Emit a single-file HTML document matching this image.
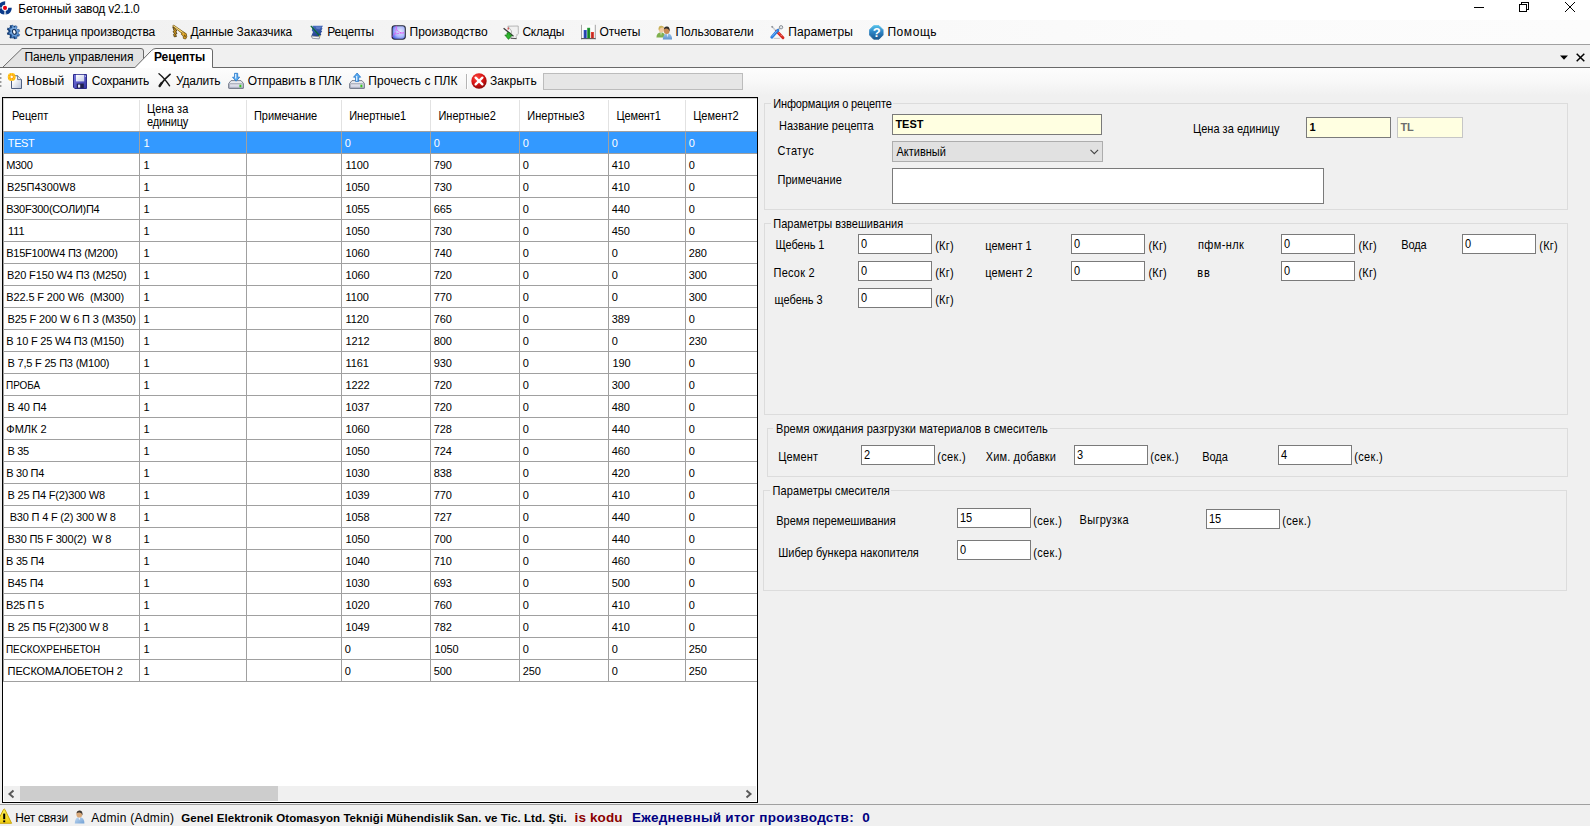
<!DOCTYPE html><html lang="ru"><head><meta charset="utf-8"><title>Бетонный завод v2.1.0</title><style>
html,body{margin:0;padding:0}
body{width:1590px;height:826px;overflow:hidden;position:relative;background:#f0f0f0;font-family:"Liberation Sans",sans-serif;font-size:11px;color:#000}
#app{position:absolute;left:0;top:0;width:1590px;height:826px;overflow:hidden}
#app div,#app span,#app svg{position:absolute;box-sizing:border-box}
#app span{white-space:pre;line-height:20px;height:20px}
.b{font-weight:bold}

</style></head><body><div id="app">
<div style="left:0px;top:0px;width:1590px;height:20px;background:#fff"></div>
<div style="left:0px;top:20px;width:1590px;height:24px;background:linear-gradient(90deg,#f0f0f0,#f4f4f4 25%,#f8f8f8 50%,#fbfbfb 75%,#fcfcfc)"></div>
<div style="left:0px;top:44px;width:1590px;height:1px;background:#a0a0a0"></div>
<div style="left:0px;top:45px;width:1590px;height:22px;background:#f0f0f0"></div>
<div style="left:0px;top:67px;width:1590px;height:1px;background:#696969"></div>
<div style="left:0px;top:68px;width:1590px;height:28px;background:linear-gradient(180deg,#fdfdfd,#f9f9f9 40%,#f0f0f0)"></div>
<svg style="left:0;top:0" width="14" height="20" viewBox="0 0 14 20"><path d="M6.04 12.79 A5.0 5.0 0 0 1 4.13 12.82 M0.05 8.60 A5.0 5.0 0 0 1 0.03 7.38" fill="none" stroke="#a9bbd4" stroke-width="3.4"/><path d="M0.03 7.38 A5.0 5.0 0 0 1 5.17 2.90 M10.00 7.73 A5.0 5.0 0 0 1 6.04 12.79 M4.13 12.82 A5.0 5.0 0 0 1 0.05 8.60" fill="none" stroke="#0a3a8a" stroke-width="3.5"/><circle cx="5" cy="7.9" r="2.05" fill="#e60012"/></svg>
<svg style="left:1470px;top:0" width="120" height="20" viewBox="0 0 120 20"><g stroke="#000" stroke-width="1" fill="none" shape-rendering="crispEdges"><path d="M4 7.500H14"/><path d="M51.500 4.500V2.500H58.500V9.500H56.500M49.500 4.500H56.500V11.500H49.500Z"/></g><path d="M95 2L105 12M105 2L95 12" stroke="#000" stroke-width="1" fill="none"/></svg>
<svg style="left:5px;top:24px" width="16" height="16" viewBox="0 0 16 16"><defs><radialGradient id="gg" cx="0.5" cy="0.45" r="0.6"><stop offset="0" stop-color="#b9d6f6"/><stop offset="0.6" stop-color="#5e97d8"/><stop offset="1" stop-color="#2a62aa"/></radialGradient></defs><path d="M12.87 5.40 L13.55 7.59 L12.01 8.25 L11.98 9.70 L13.48 10.90 L12.72 12.83 L11.11 11.92 L10.22 12.79 L10.70 14.82 L8.96 15.36 L8.21 13.42 L6.99 13.20 L6.17 14.86 L4.45 13.70 L5.01 11.86 L4.17 10.67 L2.53 11.00 L1.85 8.81 L3.39 8.15 L3.42 6.70 L1.92 5.50 L2.68 3.57 L4.29 4.48 L5.18 3.61 L4.70 1.58 L6.44 1.04 L7.19 2.98 L8.41 3.20 L9.23 1.54 L10.95 2.70 L10.39 4.54 L11.23 5.73Z" fill="#173d72"/><path d="M14.03 5.26 L14.68 7.35 L13.18 7.97 L13.16 9.34 L14.64 10.53 L13.94 12.36 L12.37 11.42 L11.56 12.24 L12.06 14.25 L10.43 14.76 L9.70 12.81 L8.58 12.60 L7.81 14.26 L6.20 13.14 L6.75 11.32 L5.96 10.20 L4.37 10.54 L3.72 8.45 L5.22 7.83 L5.24 6.46 L3.76 5.27 L4.46 3.44 L6.03 4.38 L6.84 3.56 L6.34 1.55 L7.97 1.04 L8.70 2.99 L9.82 3.20 L10.59 1.54 L12.20 2.66 L11.65 4.48 L12.44 5.60Z" fill="url(#gg)" stroke="#1d4a86" stroke-width="0.5"/><ellipse cx="9.3" cy="7.9" rx="1.8" ry="2.5" transform="rotate(-17 9.3 7.9)" fill="#fff" stroke="#15335c" stroke-width="1.2"/></svg>
<svg style="left:172px;top:24px" width="16" height="16" viewBox="0 0 16 16"><path d="M0.800 3 L3 4.200 L4.800 7 L3.600 7.600 L5 9.400 L3.600 10 L4.400 12.500 L2.200 12.800 L1.600 10.200 L2.600 9.200 L1 7.800 L2 6.600Z" fill="#c9931e" stroke="#3e2c08" stroke-width="0.800"/><path d="M0.600 2 L1.800 1.200 L12.400 8.600 L11.400 10.400Z" fill="#f0c040" stroke="#6a4a0c" stroke-width="0.700"/><path d="M10.400 7.800 L14.200 9.600 L14.800 12.800 L13.600 15 L11.400 14.400 L11.200 11.800 L9.400 10.600Z" fill="#e2a828" stroke="#6a4a0c" stroke-width="0.800"/><path d="M12.600 10.800 L13.300 13.200" stroke="#4a3408" stroke-width="1"/><path d="M1.600 2 L11.600 9" stroke="#fff0a8" stroke-width="0.700"/></svg>
<svg style="left:309px;top:24px" width="16" height="16" viewBox="0 0 16 16"><defs><linearGradient id="rg" x1="0" y1="0" x2="0.3" y2="1"><stop offset="0" stop-color="#4a70c4"/><stop offset="1" stop-color="#23418e"/></linearGradient></defs><path d="M3.600 1.800 L14 1.700 L12.600 4 L13.600 4.600 L12.200 6.600 L13.200 7.200 L11.600 9.600 L12.400 10.200 L10.800 12.600 L2.400 11.800 L4 8 L2.800 6.400Z" fill="url(#rg)"/><path d="M6.500 2.400 L12.500 2.400 L10.500 5.500 L7.500 4.800Z" fill="#7d9be0" opacity="0.550"/><path d="M2.200 12 L10.800 12.800 L10.200 14.900 L3.400 14.300Z" fill="#f2f3f8" stroke="#6a6f7c" stroke-width="0.700"/><path d="M1.800 1.800 L10.800 12" stroke="#0b6b34" stroke-width="1.200"/><path d="M10.400 11.600 L11.300 12.700" stroke="#e6c04a" stroke-width="1.100"/></svg>
<svg style="left:391px;top:24px" width="16" height="16" viewBox="0 0 16 16"><defs><radialGradient id="pg" cx="0.62" cy="0.42" r="0.75"><stop offset="0" stop-color="#e4e8ff"/><stop offset="0.55" stop-color="#aab6fb"/><stop offset="1" stop-color="#2f4fe8"/></radialGradient></defs><rect x="1.1" y="1.8" width="13.2" height="13.4" rx="2.6" fill="url(#pg)" stroke="#2a2d3a" stroke-width="1.1"/><path d="M0 13.5 L3.5 10 Q5.5 7 5.2 1 M5.2 3.5 Q6 8.5 12.5 9.2 M3.5 10 L13 8.6" fill="none" stroke="#e24ff0" stroke-width="0.8" stroke-dasharray="2 0.8"/></svg>
<svg style="left:503px;top:24px" width="16" height="16" viewBox="0 0 16 16"><path d="M4.8 2.2 L15.2 2 L15.4 9.6 L13.2 12.4 L13.6 14.8 L8 14.4 L8.5 7Z" fill="#f0f0f0" stroke="#9c9c9c" stroke-width="0.7"/><path d="M13.2 12.4 L15.4 9.6 L13 10.2Z" fill="#d0d0d0"/><path d="M0.6 4.2 L10.5 12.2" stroke="#3a3a3a" stroke-width="1.2"/><path d="M5.2 3.6 V5.6" stroke="#c82020" stroke-width="1.1"/><path d="M4 8.8 H7 V11 H9.2 L5.5 15.4 L1.8 11 H4Z" fill="#2fb52f" stroke="#157a15" stroke-width="0.7"/><path d="M7.5 14.2 L13.4 14.6" stroke="#444" stroke-width="0.9"/></svg>
<svg style="left:580px;top:24px" width="16" height="16" viewBox="0 0 16 16"><rect x="1.5" y="1" width="14" height="13.6" fill="#fbfbfb"/><path d="M1.5 0.8 V15.4 M15.3 0.8 V15.4" stroke="#a4a4a4" stroke-width="1"/><path d="M1.2 14.6 H15.6" stroke="#555" stroke-width="1.1"/><rect x="3.7" y="6" width="3" height="8.2" fill="#2b4cc2"/><rect x="7.2" y="3.8" width="2.9" height="10.4" fill="#1f9a32"/><rect x="10.9" y="8" width="3" height="6.2" fill="#e23a30"/><path d="M5.2 7 V14 M8.700 5 V14 M12.400 9 V14" stroke="#000" stroke-width="0.6" opacity="0.35"/></svg>
<svg style="left:656px;top:24px" width="16" height="16" viewBox="0 0 16 16"><defs><linearGradient id="ug" x1="0" y1="0" x2="0" y2="1"><stop offset="0" stop-color="#9fc4ea"/><stop offset="1" stop-color="#5e93cf"/></linearGradient></defs><path d="M0.400 13.600 Q0.600 8.400 5 8.200 Q9.200 8.400 9.400 13.600Z" fill="#7fb04e"/><path d="M4.400 8.400 L5 12 L5.700 8.400Z" fill="#e6f0da"/><ellipse cx="5.400" cy="5.200" rx="2.700" ry="3.200" fill="#f0c9a0"/><path d="M2.600 5.600 Q2.200 1.600 5.600 1.800 Q8 2 8 4 Q6 3 4.400 4.200 Q3.400 5 3.400 6.600Z" fill="#c9b25a"/><path d="M6.800 15.600 Q7 9.800 11.600 9.600 Q16 9.800 16.200 15.600Z" fill="url(#ug)"/><path d="M10.800 9.800 L11.500 13.500 L12.300 9.800Z" fill="#e8f0fa"/><ellipse cx="10.700" cy="6.400" rx="2.900" ry="3.500" fill="#c98a55"/><path d="M7.900 5.600 Q8 2.400 11 2.600 Q14 2.800 13.600 7.400 Q13 5 11 4.600 Q9 4.400 7.900 5.600Z" fill="#2c2a28"/></svg>
<svg style="left:769px;top:24px" width="16" height="16" viewBox="0 0 16 16"><g transform="translate(8.200 8) scale(0.880) translate(-8 -8)"><path d="M2 1.800 L8 8.200" stroke="#c9cdd2" stroke-width="1.700"/><path d="M1.600 1.400 L3 3" stroke="#8a8f96" stroke-width="1.700"/><path d="M7.200 7 L14.600 14.400" stroke="#d6241c" stroke-width="3.200" stroke-linecap="round"/><path d="M8.200 7.600 L14.400 13.800" stroke="#fff" stroke-width="0.700" stroke-dasharray="1.400 1.400"/><path d="M11.600 2.600 L8.400 6.400" stroke="#aeb4bb" stroke-width="1.800"/><circle cx="12.400" cy="2.600" r="1.900" fill="#e4e7ea" stroke="#7d848c" stroke-width="1"/><path d="M8.800 6 L1.800 14" stroke="#2a7ee0" stroke-width="3.200" stroke-linecap="round"/><path d="M8 6.400 L2 13.200" stroke="#8cc0f8" stroke-width="0.900"/><path d="M4 15.200 H11" stroke="#aaa" stroke-width="0.800"/></g></svg>
<svg style="left:868px;top:24px" width="16" height="16" viewBox="0 0 16 16"><defs><linearGradient id="hg" x1="0" y1="0" x2="0" y2="1"><stop offset="0" stop-color="#52bfe8"/><stop offset="0.45" stop-color="#2f86c6"/><stop offset="1" stop-color="#1b588f"/></linearGradient></defs><g transform="translate(8.300 8.400) scale(0.900) translate(-8.200 -8.400)"><path d="M5.200 0.900 H11.200 L15.700 5.400 V11.400 L11.200 15.900 H5.200 L0.800 11.400 V5.400Z" fill="url(#hg)" stroke="url(#hg)" stroke-width="1" stroke-linejoin="round"/></g></svg>
<svg style="left:0;top:45px" width="260" height="23" viewBox="0 0 260 23"><path d="M2.500 22.500 L22 3.500 L141 3.500 Q143.500 3.500 143.500 6 L143.500 22.500Z" fill="#e3e3e3" stroke="#696969" stroke-width="1"/><path d="M134.500 23 L151.500 5.500 Q153.500 3.500 156 3.500 L210 3.500 Q212.500 3.500 212.500 6 L212.500 23Z" fill="#fff"/><path d="M134.700 22.800 L151.500 5.500 Q153.500 3.500 156 3.500 L210 3.500 Q212.500 3.500 212.500 6 L212.500 22.500" fill="none" stroke="#696969" stroke-width="1"/></svg>
<svg style="left:1555px;top:50px" width="35" height="14" viewBox="0 0 35 14"><path d="M5 5.500 H13 L9 9.800Z" fill="#000"/><path d="M21.700 3.700 L29.300 11.300 M29.300 3.700 L21.700 11.300" stroke="#000" stroke-width="1.500" fill="none"/></svg>
<div style="left:0px;top:73px;width:1px;height:2px;background:#9a9a9a"></div>
<div style="left:1px;top:73px;width:1px;height:2px;background:#cfcfcf"></div>
<div style="left:0px;top:77px;width:1px;height:2px;background:#9a9a9a"></div>
<div style="left:1px;top:77px;width:1px;height:2px;background:#cfcfcf"></div>
<div style="left:0px;top:81px;width:1px;height:2px;background:#9a9a9a"></div>
<div style="left:1px;top:81px;width:1px;height:2px;background:#cfcfcf"></div>
<div style="left:0px;top:85px;width:1px;height:2px;background:#9a9a9a"></div>
<div style="left:1px;top:85px;width:1px;height:2px;background:#cfcfcf"></div>
<svg style="left:7px;top:72px" width="16" height="18" viewBox="0 0 16 18"><defs><linearGradient id="ng" x1="0" y1="0" x2="1" y2="1"><stop offset="0.3" stop-color="#ffffff"/><stop offset="1" stop-color="#b4c0d6"/></linearGradient></defs><path d="M4.500 3.800 H10.600 L14.500 7.600 V16.500 H4.500Z" fill="url(#ng)" stroke="#4f5f80" stroke-width="1"/><path d="M10.600 3.800 V7.600 H14.500" fill="#e4e9f2" stroke="#4f5f80" stroke-width="0.800"/><circle cx="4.700" cy="4.900" r="3.900" fill="#ffb400"/><circle cx="4.700" cy="4.900" r="2.400" fill="#ff7a00"/><path d="M4.700 1 V8.800 M0.800 4.900 H8.600 M1.900 2.100 L7.500 7.700 M7.500 2.100 L1.900 7.700" stroke="#ffe24a" stroke-width="0.800"/><circle cx="4.700" cy="4.900" r="1.100" fill="#fff"/></svg>
<svg style="left:72px;top:73px" width="16" height="16" viewBox="0 0 16 16"><defs><linearGradient id="sg" x1="0" y1="0" x2="1" y2="1"><stop offset="0" stop-color="#7676de"/><stop offset="1" stop-color="#3434a4"/></linearGradient><linearGradient id="sw" x1="0" y1="0" x2="1" y2="1"><stop offset="0" stop-color="#ffffff"/><stop offset="1" stop-color="#c4cbe6"/></linearGradient></defs><path d="M1.500 1.500 H14.500 V15.500 H2.800 L1.500 14.200Z" fill="url(#sg)" stroke="#2a2a8a" stroke-width="1"/><rect x="4" y="1.800" width="8.200" height="6.600" fill="url(#sw)"/><rect x="4.800" y="10.600" width="7" height="4.600" fill="#20204e"/><rect x="6" y="11.600" width="2.200" height="3" fill="#dfe3f6"/><rect x="13" y="2.600" width="0.900" height="1.200" fill="#c8ccf0"/></svg>
<svg style="left:157px;top:72px" width="16" height="16" viewBox="0 0 16 16"><path d="M2 1.800 Q7 5.800 12.600 13.800" stroke="#1a1a1a" stroke-width="1.400" stroke-linecap="round" fill="none"/><path d="M13 2.400 Q8 6.300 2.800 13.800" stroke="#1a1a1a" stroke-width="1.800" stroke-linecap="round" fill="none"/><path d="M4.600 11 L2.600 14" stroke="#1a1a1a" stroke-width="2.300" stroke-linecap="round"/></svg>
<svg style="left:228px;top:72px" width="16" height="18" viewBox="0 0 16 18"><defs><linearGradient id="dg" x1="0" y1="0" x2="0" y2="1"><stop offset="0" stop-color="#ececf4"/><stop offset="1" stop-color="#c4c6d8"/></linearGradient></defs><path d="M0.600 11.600 L3 8.600 H13 L15.500 11.600 V16 Q15.500 16.500 15 16.500 H1.200 Q0.600 16.500 0.600 16Z" fill="#e9eaf0" stroke="#6e7484" stroke-width="0.900"/><rect x="1.100" y="11.800" width="14" height="4.300" rx="0.600" fill="url(#dg)" stroke="#7a8092" stroke-width="0.700"/><rect x="11.400" y="12.700" width="2" height="2.600" fill="#35c41e"/><path d="M6.500 1.300 H9.700 V5.200 H11.700 L8.100 9.200 L4.500 5.200 H6.500Z" fill="#58aaf0" stroke="#1b6fc4" stroke-width="0.700"/><path d="M7.600 2 V6.500" stroke="#d6ecff" stroke-width="1.300"/></svg>
<svg style="left:349px;top:72px" width="16" height="18" viewBox="0 0 16 18"><defs><linearGradient id="dg" x1="0" y1="0" x2="0" y2="1"><stop offset="0" stop-color="#ececf4"/><stop offset="1" stop-color="#c4c6d8"/></linearGradient></defs><path d="M0.600 11.600 L3 8.600 H13 L15.500 11.600 V16 Q15.500 16.500 15 16.500 H1.200 Q0.600 16.500 0.600 16Z" fill="#e9eaf0" stroke="#6e7484" stroke-width="0.900"/><rect x="1.100" y="11.800" width="14" height="4.300" rx="0.600" fill="url(#dg)" stroke="#7a8092" stroke-width="0.700"/><rect x="11.400" y="12.700" width="2" height="2.600" fill="#35c41e"/><path d="M6.500 9.400 H9.700 V5.200 H11.700 L8.100 1 L4.500 5.200 H6.500Z" fill="#58aaf0" stroke="#1b6fc4" stroke-width="0.700"/><path d="M7.600 4 V8.800" stroke="#d6ecff" stroke-width="1.300"/></svg>
<svg style="left:470.6px;top:72.8px" width="16" height="16" viewBox="0 0 16 16"><defs><radialGradient id="cg" cx="0.38" cy="0.3" r="0.8"><stop offset="0" stop-color="#ff4a42"/><stop offset="0.5" stop-color="#d81414"/><stop offset="1" stop-color="#7a0404"/></radialGradient></defs><circle cx="8" cy="8" r="7.700" fill="url(#cg)"/><path d="M4.600 4.600 L11.400 11.400 M11.400 4.600 L4.600 11.400" stroke="#fff" stroke-width="2.300" stroke-linecap="round"/></svg>
<div style="left:466px;top:74px;width:1px;height:15px;background:#b4b4b4"></div>
<div style="left:467px;top:74px;width:1px;height:15px;background:#fff"></div>
<div style="left:543px;top:73px;width:200px;height:17px;background:#e6e6e6;border:1px solid #bcbcbc"></div>
<div style="left:2px;top:97px;width:756px;height:706px;background:#fff;border:1px solid #000"></div>
<div style="left:3px;top:131px;width:1px;height:551px;background:#a0a0a0"></div>
<div style="left:3px;top:98px;width:754px;height:1px;background:#d4d4d4"></div>
<div style="left:3px;top:98px;width:1px;height:33px;background:#d4d4d4"></div>
<div style="left:4px;top:131px;width:753px;height:1px;background:#a0a0a0"></div>
<div style="left:139px;top:100px;width:1px;height:31px;background:#e2e2e2"></div>
<div style="left:246px;top:100px;width:1px;height:31px;background:#e2e2e2"></div>
<div style="left:341px;top:100px;width:1px;height:31px;background:#e2e2e2"></div>
<div style="left:430px;top:100px;width:1px;height:31px;background:#e2e2e2"></div>
<div style="left:519px;top:100px;width:1px;height:31px;background:#e2e2e2"></div>
<div style="left:608px;top:100px;width:1px;height:31px;background:#e2e2e2"></div>
<div style="left:685px;top:100px;width:1px;height:31px;background:#e2e2e2"></div>
<div style="left:4px;top:132px;width:753px;height:21px;background:#3399ff"></div>
<div style="left:4px;top:153px;width:753px;height:1px;background:#a0a0a0"></div>
<div style="left:4px;top:175px;width:753px;height:1px;background:#a0a0a0"></div>
<div style="left:4px;top:197px;width:753px;height:1px;background:#a0a0a0"></div>
<div style="left:4px;top:219px;width:753px;height:1px;background:#a0a0a0"></div>
<div style="left:4px;top:241px;width:753px;height:1px;background:#a0a0a0"></div>
<div style="left:4px;top:263px;width:753px;height:1px;background:#a0a0a0"></div>
<div style="left:4px;top:285px;width:753px;height:1px;background:#a0a0a0"></div>
<div style="left:4px;top:307px;width:753px;height:1px;background:#a0a0a0"></div>
<div style="left:4px;top:329px;width:753px;height:1px;background:#a0a0a0"></div>
<div style="left:4px;top:351px;width:753px;height:1px;background:#a0a0a0"></div>
<div style="left:4px;top:373px;width:753px;height:1px;background:#a0a0a0"></div>
<div style="left:4px;top:395px;width:753px;height:1px;background:#a0a0a0"></div>
<div style="left:4px;top:417px;width:753px;height:1px;background:#a0a0a0"></div>
<div style="left:4px;top:439px;width:753px;height:1px;background:#a0a0a0"></div>
<div style="left:4px;top:461px;width:753px;height:1px;background:#a0a0a0"></div>
<div style="left:4px;top:483px;width:753px;height:1px;background:#a0a0a0"></div>
<div style="left:4px;top:505px;width:753px;height:1px;background:#a0a0a0"></div>
<div style="left:4px;top:527px;width:753px;height:1px;background:#a0a0a0"></div>
<div style="left:4px;top:549px;width:753px;height:1px;background:#a0a0a0"></div>
<div style="left:4px;top:571px;width:753px;height:1px;background:#a0a0a0"></div>
<div style="left:4px;top:593px;width:753px;height:1px;background:#a0a0a0"></div>
<div style="left:4px;top:615px;width:753px;height:1px;background:#a0a0a0"></div>
<div style="left:4px;top:637px;width:753px;height:1px;background:#a0a0a0"></div>
<div style="left:4px;top:659px;width:753px;height:1px;background:#a0a0a0"></div>
<div style="left:4px;top:681px;width:753px;height:1px;background:#a0a0a0"></div>
<div style="left:139px;top:132px;width:1px;height:550px;background:#a0a0a0"></div>
<div style="left:246px;top:132px;width:1px;height:550px;background:#a0a0a0"></div>
<div style="left:341px;top:132px;width:1px;height:550px;background:#a0a0a0"></div>
<div style="left:430px;top:132px;width:1px;height:550px;background:#a0a0a0"></div>
<div style="left:519px;top:132px;width:1px;height:550px;background:#a0a0a0"></div>
<div style="left:608px;top:132px;width:1px;height:550px;background:#a0a0a0"></div>
<div style="left:685px;top:132px;width:1px;height:550px;background:#a0a0a0"></div>
<div style="left:4px;top:786px;width:752px;height:15px;background:#f0f0f0"></div>
<div style="left:20px;top:786px;width:258px;height:15px;background:#cdcdcd"></div>
<svg style="left:4px;top:786px" width="752" height="15" viewBox="0 0 752 15"><path d="M9.500 4.500 L5.500 8 L9.500 11.500 M742.500 4.500 L746.500 8 L742.500 11.500" fill="none" stroke="#5a5a5a" stroke-width="2"/></svg>
<div style="left:764px;top:103px;width:804px;height:107px;border:1px solid #dcdcdc"></div>
<div style="left:771px;top:103px;width:122px;height:1px;background:#f0f0f0"></div>
<div style="left:892px;top:114px;width:210px;height:21px;background:#ffffe1;border:1px solid #7a7a7a"></div>
<div style="left:892px;top:141px;width:211px;height:21px;background:#e1e1e1;border:1px solid #adadad"></div>
<svg style="left:1088px;top:148px" width="12" height="8" viewBox="0 0 12 8"><path d="M2.500 1.800 L6.300 5.600 L10.100 1.800" fill="none" stroke="#444" stroke-width="1.100"/></svg>
<div style="left:892px;top:168px;width:432px;height:36px;background:#fff;border:1px solid #7a7a7a"></div>
<div style="left:1306px;top:117px;width:85px;height:21px;background:#ffffe1;border:1px solid #7a7a7a"></div>
<div style="left:1397px;top:117px;width:66px;height:21px;background:#ffffe1;border:1px solid #c6c6c6"></div>
<div style="left:764px;top:223px;width:804px;height:192px;border:1px solid #dcdcdc"></div>
<div style="left:771px;top:223px;width:134px;height:1px;background:#f0f0f0"></div>
<div style="left:858px;top:234px;width:74px;height:20px;background:#fff;border:1px solid #7a7a7a"></div>
<div style="left:858px;top:261px;width:74px;height:20px;background:#fff;border:1px solid #7a7a7a"></div>
<div style="left:858px;top:288px;width:74px;height:20px;background:#fff;border:1px solid #7a7a7a"></div>
<div style="left:1071px;top:234px;width:74px;height:20px;background:#fff;border:1px solid #7a7a7a"></div>
<div style="left:1071px;top:261px;width:74px;height:20px;background:#fff;border:1px solid #7a7a7a"></div>
<div style="left:1281px;top:234px;width:74px;height:20px;background:#fff;border:1px solid #7a7a7a"></div>
<div style="left:1281px;top:261px;width:74px;height:20px;background:#fff;border:1px solid #7a7a7a"></div>
<div style="left:1462px;top:234px;width:74px;height:20px;background:#fff;border:1px solid #7a7a7a"></div>
<div style="left:767px;top:428px;width:801px;height:49px;border:1px solid #dcdcdc"></div>
<div style="left:773px;top:428px;width:277px;height:1px;background:#f0f0f0"></div>
<div style="left:861px;top:445px;width:74px;height:20px;background:#fff;border:1px solid #7a7a7a"></div>
<div style="left:1074px;top:445px;width:74px;height:20px;background:#fff;border:1px solid #7a7a7a"></div>
<div style="left:1278px;top:445px;width:74px;height:20px;background:#fff;border:1px solid #7a7a7a"></div>
<div style="left:763px;top:490px;width:804px;height:101px;border:1px solid #dcdcdc"></div>
<div style="left:770px;top:490px;width:121px;height:1px;background:#f0f0f0"></div>
<div style="left:957px;top:508px;width:74px;height:20px;background:#fff;border:1px solid #7a7a7a"></div>
<div style="left:1206px;top:509px;width:74px;height:20px;background:#fff;border:1px solid #7a7a7a"></div>
<div style="left:957px;top:540px;width:74px;height:20px;background:#fff;border:1px solid #7a7a7a"></div>
<div style="left:0px;top:804px;width:1590px;height:1px;background:#a0a0a0"></div>
<svg style="left:0;top:806px" width="13" height="20" viewBox="0 0 13 20"><defs><linearGradient id="wg" x1="0" y1="0" x2="0" y2="1"><stop offset="0" stop-color="#fff35a"/><stop offset="1" stop-color="#f0cc10"/></linearGradient></defs><path d="M-3.500 17.300 L3.600 3.400 Q4.200 2.400 4.800 3.400 L11.600 17.300Z" fill="url(#wg)" stroke="#c9a60a" stroke-width="1" stroke-linejoin="round"/><path d="M4.200 7.600 V13.200" stroke="#000" stroke-width="2"/><rect x="3.200" y="14.400" width="2" height="1.800" fill="#000"/></svg>
<svg style="left:74px;top:809px" width="12" height="16" viewBox="0 0 12 16"><defs><linearGradient id="bg2" x1="0" y1="0" x2="1" y2="1"><stop offset="0" stop-color="#c4dbf2"/><stop offset="1" stop-color="#6f9fd4"/></linearGradient></defs><path d="M0.800 14.600 Q0.800 8.200 5.400 8 Q10.400 8.200 10.400 14.600Z" fill="url(#bg2)"/><path d="M4.400 8.200 L5.300 11.200 L6.400 8.200Z" fill="#f2f6fb"/><ellipse cx="5.300" cy="5.200" rx="2.900" ry="3.400" fill="#d9a878"/><path d="M2.600 4.400 Q3 1.400 6 1.600 Q9 2 8.400 6.600 Q7.800 3.800 5.600 3.600 Q3.600 3.400 2.600 4.400Z" fill="#3a3632"/></svg>
<span style="left:18.3px;top:-1.16px;font-size:12px;letter-spacing:-0.223px;">Бетонный завод v2.1.0</span>
<span style="left:24.4px;top:21.84px;font-size:12px;letter-spacing:-0.152px;">Страница производства</span>
<span style="left:190.4px;top:21.84px;font-size:12px;letter-spacing:-0.068px;">Данные Заказчика</span>
<span style="left:327.2px;top:21.84px;font-size:12px;letter-spacing:-0.215px;">Рецепты</span>
<span style="left:409.6px;top:21.84px;font-size:12px;letter-spacing:-0.014px;">Производство</span>
<span style="left:522.5px;top:21.84px;font-size:12px;letter-spacing:-0.292px;">Склады</span>
<span style="left:599.5px;top:21.84px;font-size:12px;letter-spacing:-0.117px;">Отчеты</span>
<span style="left:675.5px;top:21.84px;font-size:12px;letter-spacing:-0.021px;">Пользователи</span>
<span style="left:788.3px;top:21.84px;font-size:12px;letter-spacing:0.066px;">Параметры</span>
<span style="left:887.4px;top:21.84px;font-size:12px;letter-spacing:0.568px;">Помощь</span>
<span style="left:872.8px;top:22.50px;font-size:13px;color:#fff;font-weight:bold;">?</span>
<span style="left:24.4px;top:46.84px;font-size:12px;letter-spacing:-0.072px;">Панель управления</span>
<span style="left:154px;top:46.84px;font-size:12px;font-weight:bold;letter-spacing:-0.102px;">Рецепты</span>
<span style="left:26.4px;top:70.84px;font-size:12px;letter-spacing:0.213px;">Новый</span>
<span style="left:91.8px;top:70.84px;font-size:12px;letter-spacing:-0.268px;">Сохранить</span>
<span style="left:176px;top:70.84px;font-size:12px;letter-spacing:-0.221px;">Удалить</span>
<span style="left:247.8px;top:70.84px;font-size:12px;letter-spacing:-0.146px;">Отправить в ПЛК</span>
<span style="left:368.3px;top:70.84px;font-size:12px;letter-spacing:0.050px;">Прочесть с ПЛК</span>
<span style="left:490px;top:70.84px;font-size:12px;letter-spacing:0.080px;">Закрыть</span>
<span style="left:12px;top:106.19px;font-size:11px;transform:scale(1.0000,1.09);transform-origin:0 13.81px;letter-spacing:-0.013px;">Рецепт</span>
<span style="left:254px;top:106.19px;font-size:11px;transform:scale(1.0000,1.09);transform-origin:0 13.81px;letter-spacing:-0.064px;">Примечание</span>
<span style="left:349.2px;top:106.19px;font-size:11px;transform:scale(1.0000,1.09);transform-origin:0 13.81px;letter-spacing:-0.042px;">Инертные1</span>
<span style="left:438.4px;top:106.19px;font-size:11px;transform:scale(1.0000,1.09);transform-origin:0 13.81px;letter-spacing:0.021px;">Инертные2</span>
<span style="left:527.2px;top:106.19px;font-size:11px;transform:scale(1.0000,1.09);transform-origin:0 13.81px;letter-spacing:0.033px;">Инертные3</span>
<span style="left:616.5px;top:106.19px;font-size:11px;transform:scale(1.0000,1.09);transform-origin:0 13.81px;letter-spacing:-0.145px;">Цемент1</span>
<span style="left:693.2px;top:106.19px;font-size:11px;transform:scale(1.0000,1.09);transform-origin:0 13.81px;letter-spacing:0.038px;">Цемент2</span>
<span style="left:147px;top:99.19px;font-size:11px;transform:scale(1.0000,1.09);transform-origin:0 13.81px;letter-spacing:0.105px;">Цена за</span>
<span style="left:147px;top:112.19px;font-size:11px;transform:scale(1.0000,1.09);transform-origin:0 13.81px;letter-spacing:-0.195px;">единицу</span>
<span style="left:7.8px;top:133.19px;font-size:11px;color:#fff;letter-spacing:-0.375px;">TEST</span>
<span style="left:143.6px;top:133.19px;font-size:11px;color:#fff;">1</span>
<span style="left:344.7px;top:133.19px;font-size:11px;color:#fff;letter-spacing:-0.120px;">0</span>
<span style="left:433.7px;top:133.19px;font-size:11px;color:#fff;letter-spacing:-0.120px;">0</span>
<span style="left:522.7px;top:133.19px;font-size:11px;color:#fff;letter-spacing:-0.120px;">0</span>
<span style="left:611.7px;top:133.19px;font-size:11px;color:#fff;letter-spacing:-0.120px;">0</span>
<span style="left:688.7px;top:133.19px;font-size:11px;color:#fff;letter-spacing:-0.120px;">0</span>
<span style="left:6.2px;top:155.19px;font-size:11px;letter-spacing:-0.310px;">M300</span>
<span style="left:143.6px;top:155.19px;font-size:11px;">1</span>
<span style="left:345.5px;top:155.19px;font-size:11px;letter-spacing:-0.120px;">1100</span>
<span style="left:433.7px;top:155.19px;font-size:11px;letter-spacing:-0.120px;">790</span>
<span style="left:522.7px;top:155.19px;font-size:11px;letter-spacing:-0.120px;">0</span>
<span style="left:611.7px;top:155.19px;font-size:11px;letter-spacing:-0.120px;">410</span>
<span style="left:688.7px;top:155.19px;font-size:11px;letter-spacing:-0.120px;">0</span>
<span style="left:7px;top:177.19px;font-size:11px;letter-spacing:0.005px;">B25П4300W8</span>
<span style="left:143.6px;top:177.19px;font-size:11px;">1</span>
<span style="left:345.5px;top:177.19px;font-size:11px;letter-spacing:-0.120px;">1050</span>
<span style="left:433.7px;top:177.19px;font-size:11px;letter-spacing:-0.120px;">730</span>
<span style="left:522.7px;top:177.19px;font-size:11px;letter-spacing:-0.120px;">0</span>
<span style="left:611.7px;top:177.19px;font-size:11px;letter-spacing:-0.120px;">410</span>
<span style="left:688.7px;top:177.19px;font-size:11px;letter-spacing:-0.120px;">0</span>
<span style="left:6.2px;top:199.19px;font-size:11px;letter-spacing:-0.269px;">B30F300(СОЛИ)П4</span>
<span style="left:143.6px;top:199.19px;font-size:11px;">1</span>
<span style="left:345.5px;top:199.19px;font-size:11px;letter-spacing:-0.120px;">1055</span>
<span style="left:433.7px;top:199.19px;font-size:11px;letter-spacing:-0.120px;">665</span>
<span style="left:522.7px;top:199.19px;font-size:11px;letter-spacing:-0.120px;">0</span>
<span style="left:611.7px;top:199.19px;font-size:11px;letter-spacing:-0.120px;">440</span>
<span style="left:688.7px;top:199.19px;font-size:11px;letter-spacing:-0.120px;">0</span>
<span style="left:8px;top:221.19px;font-size:11px;letter-spacing:-0.017px;">111</span>
<span style="left:143.6px;top:221.19px;font-size:11px;">1</span>
<span style="left:345.5px;top:221.19px;font-size:11px;letter-spacing:-0.120px;">1050</span>
<span style="left:433.7px;top:221.19px;font-size:11px;letter-spacing:-0.120px;">730</span>
<span style="left:522.7px;top:221.19px;font-size:11px;letter-spacing:-0.120px;">0</span>
<span style="left:611.7px;top:221.19px;font-size:11px;letter-spacing:-0.120px;">450</span>
<span style="left:688.7px;top:221.19px;font-size:11px;letter-spacing:-0.120px;">0</span>
<span style="left:6.2px;top:243.19px;font-size:11px;letter-spacing:-0.251px;">B15F100W4 П3 (M200)</span>
<span style="left:143.6px;top:243.19px;font-size:11px;">1</span>
<span style="left:345.5px;top:243.19px;font-size:11px;letter-spacing:-0.120px;">1060</span>
<span style="left:433.7px;top:243.19px;font-size:11px;letter-spacing:-0.120px;">740</span>
<span style="left:522.7px;top:243.19px;font-size:11px;letter-spacing:-0.120px;">0</span>
<span style="left:611.7px;top:243.19px;font-size:11px;letter-spacing:-0.120px;">0</span>
<span style="left:688.7px;top:243.19px;font-size:11px;letter-spacing:-0.120px;">280</span>
<span style="left:7px;top:265.19px;font-size:11px;letter-spacing:-0.133px;">B20 F150 W4 П3 (M250)</span>
<span style="left:143.6px;top:265.19px;font-size:11px;">1</span>
<span style="left:345.5px;top:265.19px;font-size:11px;letter-spacing:-0.120px;">1060</span>
<span style="left:433.7px;top:265.19px;font-size:11px;letter-spacing:-0.120px;">720</span>
<span style="left:522.7px;top:265.19px;font-size:11px;letter-spacing:-0.120px;">0</span>
<span style="left:611.7px;top:265.19px;font-size:11px;letter-spacing:-0.120px;">0</span>
<span style="left:688.7px;top:265.19px;font-size:11px;letter-spacing:-0.120px;">300</span>
<span style="left:6.3px;top:287.19px;font-size:11px;letter-spacing:-0.126px;">B22.5 F 200 W6  (M300)</span>
<span style="left:143.6px;top:287.19px;font-size:11px;">1</span>
<span style="left:345.5px;top:287.19px;font-size:11px;letter-spacing:-0.120px;">1100</span>
<span style="left:433.7px;top:287.19px;font-size:11px;letter-spacing:-0.120px;">770</span>
<span style="left:522.7px;top:287.19px;font-size:11px;letter-spacing:-0.120px;">0</span>
<span style="left:611.7px;top:287.19px;font-size:11px;letter-spacing:-0.120px;">0</span>
<span style="left:688.7px;top:287.19px;font-size:11px;letter-spacing:-0.120px;">300</span>
<span style="left:7.5px;top:309.19px;font-size:11px;letter-spacing:-0.131px;">B25 F 200 W 6 П 3 (M350)</span>
<span style="left:143.6px;top:309.19px;font-size:11px;">1</span>
<span style="left:345.5px;top:309.19px;font-size:11px;letter-spacing:-0.120px;">1120</span>
<span style="left:433.7px;top:309.19px;font-size:11px;letter-spacing:-0.120px;">760</span>
<span style="left:522.7px;top:309.19px;font-size:11px;letter-spacing:-0.120px;">0</span>
<span style="left:611.7px;top:309.19px;font-size:11px;letter-spacing:-0.120px;">389</span>
<span style="left:688.7px;top:309.19px;font-size:11px;letter-spacing:-0.120px;">0</span>
<span style="left:6.3px;top:331.19px;font-size:11px;letter-spacing:-0.211px;">B 10 F 25 W4 П3 (M150)</span>
<span style="left:143.6px;top:331.19px;font-size:11px;">1</span>
<span style="left:345.5px;top:331.19px;font-size:11px;letter-spacing:-0.120px;">1212</span>
<span style="left:433.7px;top:331.19px;font-size:11px;letter-spacing:-0.120px;">800</span>
<span style="left:522.7px;top:331.19px;font-size:11px;letter-spacing:-0.120px;">0</span>
<span style="left:611.7px;top:331.19px;font-size:11px;letter-spacing:-0.120px;">0</span>
<span style="left:688.7px;top:331.19px;font-size:11px;letter-spacing:-0.120px;">230</span>
<span style="left:7.5px;top:353.19px;font-size:11px;letter-spacing:-0.197px;">B 7,5 F 25 П3 (M100)</span>
<span style="left:143.6px;top:353.19px;font-size:11px;">1</span>
<span style="left:345.5px;top:353.19px;font-size:11px;letter-spacing:-0.120px;">1161</span>
<span style="left:433.7px;top:353.19px;font-size:11px;letter-spacing:-0.120px;">930</span>
<span style="left:522.7px;top:353.19px;font-size:11px;letter-spacing:-0.120px;">0</span>
<span style="left:612.5px;top:353.19px;font-size:11px;letter-spacing:-0.120px;">190</span>
<span style="left:688.7px;top:353.19px;font-size:11px;letter-spacing:-0.120px;">0</span>
<span style="left:6.3px;top:375.19px;font-size:11px;transform:scale(0.9030,1.0);transform-origin:0 13.81px;letter-spacing:0.000px;">ПРОБА</span>
<span style="left:143.6px;top:375.19px;font-size:11px;">1</span>
<span style="left:345.5px;top:375.19px;font-size:11px;letter-spacing:-0.120px;">1222</span>
<span style="left:433.7px;top:375.19px;font-size:11px;letter-spacing:-0.120px;">720</span>
<span style="left:522.7px;top:375.19px;font-size:11px;letter-spacing:-0.120px;">0</span>
<span style="left:611.7px;top:375.19px;font-size:11px;letter-spacing:-0.120px;">300</span>
<span style="left:688.7px;top:375.19px;font-size:11px;letter-spacing:-0.120px;">0</span>
<span style="left:7.5px;top:397.19px;font-size:11px;letter-spacing:-0.103px;">B 40 П4</span>
<span style="left:143.6px;top:397.19px;font-size:11px;">1</span>
<span style="left:345.5px;top:397.19px;font-size:11px;letter-spacing:-0.120px;">1037</span>
<span style="left:433.7px;top:397.19px;font-size:11px;letter-spacing:-0.120px;">720</span>
<span style="left:522.7px;top:397.19px;font-size:11px;letter-spacing:-0.120px;">0</span>
<span style="left:611.7px;top:397.19px;font-size:11px;letter-spacing:-0.120px;">480</span>
<span style="left:688.7px;top:397.19px;font-size:11px;letter-spacing:-0.120px;">0</span>
<span style="left:6.3px;top:419.19px;font-size:11px;letter-spacing:-0.006px;">ФМЛК 2</span>
<span style="left:143.6px;top:419.19px;font-size:11px;">1</span>
<span style="left:345.5px;top:419.19px;font-size:11px;letter-spacing:-0.120px;">1060</span>
<span style="left:433.7px;top:419.19px;font-size:11px;letter-spacing:-0.120px;">728</span>
<span style="left:522.7px;top:419.19px;font-size:11px;letter-spacing:-0.120px;">0</span>
<span style="left:611.7px;top:419.19px;font-size:11px;letter-spacing:-0.120px;">440</span>
<span style="left:688.7px;top:419.19px;font-size:11px;letter-spacing:-0.120px;">0</span>
<span style="left:7.5px;top:441.19px;font-size:11px;letter-spacing:-0.314px;">B 35</span>
<span style="left:143.6px;top:441.19px;font-size:11px;">1</span>
<span style="left:345.5px;top:441.19px;font-size:11px;letter-spacing:-0.120px;">1050</span>
<span style="left:433.7px;top:441.19px;font-size:11px;letter-spacing:-0.120px;">724</span>
<span style="left:522.7px;top:441.19px;font-size:11px;letter-spacing:-0.120px;">0</span>
<span style="left:611.7px;top:441.19px;font-size:11px;letter-spacing:-0.120px;">460</span>
<span style="left:688.7px;top:441.19px;font-size:11px;letter-spacing:-0.120px;">0</span>
<span style="left:6.3px;top:463.19px;font-size:11px;letter-spacing:-0.286px;">B 30 П4</span>
<span style="left:143.6px;top:463.19px;font-size:11px;">1</span>
<span style="left:345.5px;top:463.19px;font-size:11px;letter-spacing:-0.120px;">1030</span>
<span style="left:433.7px;top:463.19px;font-size:11px;letter-spacing:-0.120px;">838</span>
<span style="left:522.7px;top:463.19px;font-size:11px;letter-spacing:-0.120px;">0</span>
<span style="left:611.7px;top:463.19px;font-size:11px;letter-spacing:-0.120px;">420</span>
<span style="left:688.7px;top:463.19px;font-size:11px;letter-spacing:-0.120px;">0</span>
<span style="left:7.6px;top:485.19px;font-size:11px;letter-spacing:-0.191px;">B 25 П4 F(2)300 W8</span>
<span style="left:143.6px;top:485.19px;font-size:11px;">1</span>
<span style="left:345.5px;top:485.19px;font-size:11px;letter-spacing:-0.120px;">1039</span>
<span style="left:433.7px;top:485.19px;font-size:11px;letter-spacing:-0.120px;">770</span>
<span style="left:522.7px;top:485.19px;font-size:11px;letter-spacing:-0.120px;">0</span>
<span style="left:611.7px;top:485.19px;font-size:11px;letter-spacing:-0.120px;">410</span>
<span style="left:688.7px;top:485.19px;font-size:11px;letter-spacing:-0.120px;">0</span>
<span style="left:9.7px;top:507.19px;font-size:11px;letter-spacing:-0.186px;">B30 П 4 F (2) 300 W 8</span>
<span style="left:143.6px;top:507.19px;font-size:11px;">1</span>
<span style="left:345.5px;top:507.19px;font-size:11px;letter-spacing:-0.120px;">1058</span>
<span style="left:433.7px;top:507.19px;font-size:11px;letter-spacing:-0.120px;">727</span>
<span style="left:522.7px;top:507.19px;font-size:11px;letter-spacing:-0.120px;">0</span>
<span style="left:611.7px;top:507.19px;font-size:11px;letter-spacing:-0.120px;">440</span>
<span style="left:688.7px;top:507.19px;font-size:11px;letter-spacing:-0.120px;">0</span>
<span style="left:7.6px;top:529.19px;font-size:11px;letter-spacing:-0.161px;">B30 П5 F 300(2)  W 8</span>
<span style="left:143.6px;top:529.19px;font-size:11px;">1</span>
<span style="left:345.5px;top:529.19px;font-size:11px;letter-spacing:-0.120px;">1050</span>
<span style="left:433.7px;top:529.19px;font-size:11px;letter-spacing:-0.120px;">700</span>
<span style="left:522.7px;top:529.19px;font-size:11px;letter-spacing:-0.120px;">0</span>
<span style="left:611.7px;top:529.19px;font-size:11px;letter-spacing:-0.120px;">440</span>
<span style="left:688.7px;top:529.19px;font-size:11px;letter-spacing:-0.120px;">0</span>
<span style="left:6.1px;top:551.19px;font-size:11px;letter-spacing:-0.253px;">B 35 П4</span>
<span style="left:143.6px;top:551.19px;font-size:11px;">1</span>
<span style="left:345.5px;top:551.19px;font-size:11px;letter-spacing:-0.120px;">1040</span>
<span style="left:433.7px;top:551.19px;font-size:11px;letter-spacing:-0.120px;">710</span>
<span style="left:522.7px;top:551.19px;font-size:11px;letter-spacing:-0.120px;">0</span>
<span style="left:611.7px;top:551.19px;font-size:11px;letter-spacing:-0.120px;">460</span>
<span style="left:688.7px;top:551.19px;font-size:11px;letter-spacing:-0.120px;">0</span>
<span style="left:7.6px;top:573.19px;font-size:11px;letter-spacing:-0.131px;">B45 П4</span>
<span style="left:143.6px;top:573.19px;font-size:11px;">1</span>
<span style="left:345.5px;top:573.19px;font-size:11px;letter-spacing:-0.120px;">1030</span>
<span style="left:433.7px;top:573.19px;font-size:11px;letter-spacing:-0.120px;">693</span>
<span style="left:522.7px;top:573.19px;font-size:11px;letter-spacing:-0.120px;">0</span>
<span style="left:611.7px;top:573.19px;font-size:11px;letter-spacing:-0.120px;">500</span>
<span style="left:688.7px;top:573.19px;font-size:11px;letter-spacing:-0.120px;">0</span>
<span style="left:6.1px;top:595.19px;font-size:11px;letter-spacing:-0.286px;">B25 П 5</span>
<span style="left:143.6px;top:595.19px;font-size:11px;">1</span>
<span style="left:345.5px;top:595.19px;font-size:11px;letter-spacing:-0.120px;">1020</span>
<span style="left:433.7px;top:595.19px;font-size:11px;letter-spacing:-0.120px;">760</span>
<span style="left:522.7px;top:595.19px;font-size:11px;letter-spacing:-0.120px;">0</span>
<span style="left:611.7px;top:595.19px;font-size:11px;letter-spacing:-0.120px;">410</span>
<span style="left:688.7px;top:595.19px;font-size:11px;letter-spacing:-0.120px;">0</span>
<span style="left:7.6px;top:617.19px;font-size:11px;letter-spacing:-0.167px;">B 25 П5 F(2)300 W 8</span>
<span style="left:143.6px;top:617.19px;font-size:11px;">1</span>
<span style="left:345.5px;top:617.19px;font-size:11px;letter-spacing:-0.120px;">1049</span>
<span style="left:433.7px;top:617.19px;font-size:11px;letter-spacing:-0.120px;">782</span>
<span style="left:522.7px;top:617.19px;font-size:11px;letter-spacing:-0.120px;">0</span>
<span style="left:611.7px;top:617.19px;font-size:11px;letter-spacing:-0.120px;">410</span>
<span style="left:688.7px;top:617.19px;font-size:11px;letter-spacing:-0.120px;">0</span>
<span style="left:6.1px;top:639.19px;font-size:11px;transform:scale(0.8981,1.0);transform-origin:0 13.81px;letter-spacing:0.000px;">ПЕСКОХРЕНБЕТОН</span>
<span style="left:143.6px;top:639.19px;font-size:11px;">1</span>
<span style="left:344.7px;top:639.19px;font-size:11px;letter-spacing:-0.120px;">0</span>
<span style="left:434.5px;top:639.19px;font-size:11px;letter-spacing:-0.120px;">1050</span>
<span style="left:522.7px;top:639.19px;font-size:11px;letter-spacing:-0.120px;">0</span>
<span style="left:611.7px;top:639.19px;font-size:11px;letter-spacing:-0.120px;">0</span>
<span style="left:688.7px;top:639.19px;font-size:11px;letter-spacing:-0.120px;">250</span>
<span style="left:7.6px;top:661.19px;font-size:11px;letter-spacing:-0.120px;">ПЕСКОМАЛОБЕТОН 2</span>
<span style="left:143.6px;top:661.19px;font-size:11px;">1</span>
<span style="left:344.7px;top:661.19px;font-size:11px;letter-spacing:-0.120px;">0</span>
<span style="left:433.7px;top:661.19px;font-size:11px;letter-spacing:-0.120px;">500</span>
<span style="left:522.7px;top:661.19px;font-size:11px;letter-spacing:-0.120px;">250</span>
<span style="left:611.7px;top:661.19px;font-size:11px;letter-spacing:-0.120px;">0</span>
<span style="left:688.7px;top:661.19px;font-size:11px;letter-spacing:-0.120px;">250</span>
<span style="left:773.2px;top:94.19px;font-size:11px;transform:scale(1.0000,1.09);transform-origin:0 13.81px;letter-spacing:-0.132px;">Информация о рецепте</span>
<span style="left:779px;top:116.19px;font-size:11px;transform:scale(1.0000,1.09);transform-origin:0 13.81px;letter-spacing:0.064px;">Название рецепта</span>
<span style="left:777.4px;top:141.19px;font-size:11px;transform:scale(1.0000,1.09);transform-origin:0 13.81px;letter-spacing:0.324px;">Статус</span>
<span style="left:777.4px;top:170.19px;font-size:11px;transform:scale(1.0000,1.09);transform-origin:0 13.81px;letter-spacing:0.081px;">Примечание</span>
<span style="left:895.4px;top:114.09px;font-size:11px;font-weight:bold;">TEST</span>
<span style="left:896.5px;top:142.19px;font-size:11px;transform:scale(1.0000,1.09);transform-origin:0 13.81px;letter-spacing:-0.020px;">Активный</span>
<span style="left:1193px;top:119.19px;font-size:11px;transform:scale(1.0000,1.09);transform-origin:0 13.81px;letter-spacing:0.022px;">Цена за единицу</span>
<span style="left:1309.4px;top:117.09px;font-size:11px;font-weight:bold;">1</span>
<span style="left:1400.4px;top:117.09px;font-size:11px;color:#6d6d6d;font-weight:bold;">TL</span>
<span style="left:773.2px;top:214.19px;font-size:11px;transform:scale(1.0000,1.09);transform-origin:0 13.81px;letter-spacing:0.036px;">Параметры взвешивания</span>
<span style="left:775.4px;top:235.19px;font-size:11px;transform:scale(1.0000,1.09);transform-origin:0 13.81px;letter-spacing:-0.085px;">Щебень 1</span>
<span style="left:860.9px;top:233.79px;font-size:11px;transform:scale(1.0000,1.09);transform-origin:0 13.81px;">0</span>
<span style="left:935.2px;top:235.89px;font-size:11px;transform:scale(1.0000,1.09);transform-origin:0 13.81px;letter-spacing:0.250px;">(Кг)</span>
<span style="left:773.5px;top:263.19px;font-size:11px;transform:scale(1.0000,1.09);transform-origin:0 13.81px;letter-spacing:0.239px;">Песок 2</span>
<span style="left:860.9px;top:260.79px;font-size:11px;transform:scale(1.0000,1.09);transform-origin:0 13.81px;">0</span>
<span style="left:935.2px;top:262.89px;font-size:11px;transform:scale(1.0000,1.09);transform-origin:0 13.81px;letter-spacing:0.250px;">(Кг)</span>
<span style="left:774.6px;top:290.19px;font-size:11px;transform:scale(1.0000,1.09);transform-origin:0 13.81px;letter-spacing:-0.015px;">щебень 3</span>
<span style="left:860.9px;top:287.79px;font-size:11px;transform:scale(1.0000,1.09);transform-origin:0 13.81px;">0</span>
<span style="left:935.2px;top:289.89px;font-size:11px;transform:scale(1.0000,1.09);transform-origin:0 13.81px;letter-spacing:0.250px;">(Кг)</span>
<span style="left:985.2px;top:236.19px;font-size:11px;transform:scale(1.0000,1.09);transform-origin:0 13.81px;letter-spacing:0.033px;">цемент 1</span>
<span style="left:1073.9px;top:233.79px;font-size:11px;transform:scale(1.0000,1.09);transform-origin:0 13.81px;">0</span>
<span style="left:1148.4px;top:235.89px;font-size:11px;transform:scale(1.0000,1.09);transform-origin:0 13.81px;letter-spacing:0.217px;">(Кг)</span>
<span style="left:985.2px;top:263.19px;font-size:11px;transform:scale(1.0000,1.09);transform-origin:0 13.81px;letter-spacing:0.119px;">цемент 2</span>
<span style="left:1073.9px;top:260.79px;font-size:11px;transform:scale(1.0000,1.09);transform-origin:0 13.81px;">0</span>
<span style="left:1148.4px;top:262.89px;font-size:11px;transform:scale(1.0000,1.09);transform-origin:0 13.81px;letter-spacing:0.217px;">(Кг)</span>
<span style="left:1198px;top:235.19px;font-size:11px;transform:scale(1.0000,1.09);transform-origin:0 13.81px;letter-spacing:0.376px;">пфм-нлк</span>
<span style="left:1283.9px;top:233.79px;font-size:11px;transform:scale(1.0000,1.09);transform-origin:0 13.81px;">0</span>
<span style="left:1358.4px;top:235.89px;font-size:11px;transform:scale(1.0000,1.09);transform-origin:0 13.81px;letter-spacing:0.217px;">(Кг)</span>
<span style="left:1197.2px;top:263.19px;font-size:11px;transform:scale(1.0000,1.09);transform-origin:0 13.81px;letter-spacing:0.912px;">вв</span>
<span style="left:1283.9px;top:260.79px;font-size:11px;transform:scale(1.0000,1.09);transform-origin:0 13.81px;">0</span>
<span style="left:1358.4px;top:262.89px;font-size:11px;transform:scale(1.0000,1.09);transform-origin:0 13.81px;letter-spacing:0.217px;">(Кг)</span>
<span style="left:1401.3px;top:235.19px;font-size:11px;transform:scale(1.0000,1.09);transform-origin:0 13.81px;letter-spacing:-0.150px;">Вода</span>
<span style="left:1464.9px;top:233.79px;font-size:11px;transform:scale(1.0000,1.09);transform-origin:0 13.81px;">0</span>
<span style="left:1539.2px;top:235.89px;font-size:11px;transform:scale(1.0000,1.09);transform-origin:0 13.81px;letter-spacing:0.283px;">(Кг)</span>
<span style="left:776px;top:419.19px;font-size:11px;transform:scale(1.0000,1.09);transform-origin:0 13.81px;letter-spacing:0.081px;">Время ожидания разгрузки материалов в смеситель</span>
<span style="left:778.2px;top:447.19px;font-size:11px;transform:scale(1.0000,1.09);transform-origin:0 13.81px;letter-spacing:0.148px;">Цемент</span>
<span style="left:863.9px;top:444.79px;font-size:11px;transform:scale(1.0000,1.09);transform-origin:0 13.81px;">2</span>
<span style="left:937.2px;top:447.19px;font-size:11px;transform:scale(1.0000,1.09);transform-origin:0 13.81px;letter-spacing:0.357px;">(сек.)</span>
<span style="left:985.7px;top:447.19px;font-size:11px;transform:scale(1.0000,1.09);transform-origin:0 13.81px;letter-spacing:0.148px;">Хим. добавки</span>
<span style="left:1076.9px;top:444.79px;font-size:11px;transform:scale(1.0000,1.09);transform-origin:0 13.81px;">3</span>
<span style="left:1150.2px;top:447.19px;font-size:11px;transform:scale(1.0000,1.09);transform-origin:0 13.81px;letter-spacing:0.317px;">(сек.)</span>
<span style="left:1202.2px;top:447.19px;font-size:11px;transform:scale(1.0000,1.09);transform-origin:0 13.81px;letter-spacing:-0.017px;">Вода</span>
<span style="left:1280.9px;top:444.79px;font-size:11px;transform:scale(1.0000,1.09);transform-origin:0 13.81px;">4</span>
<span style="left:1354.2px;top:447.19px;font-size:11px;transform:scale(1.0000,1.09);transform-origin:0 13.81px;letter-spacing:0.338px;">(сек.)</span>
<span style="left:772.6px;top:481.19px;font-size:11px;transform:scale(1.0000,1.09);transform-origin:0 13.81px;letter-spacing:0.080px;">Параметры смесителя</span>
<span style="left:776.2px;top:511.19px;font-size:11px;transform:scale(1.0000,1.09);transform-origin:0 13.81px;letter-spacing:0.021px;">Время перемешивания</span>
<span style="left:959.9px;top:507.79px;font-size:11px;transform:scale(1.0000,1.09);transform-origin:0 13.81px;">15</span>
<span style="left:1033.2px;top:511.19px;font-size:11px;transform:scale(1.0000,1.09);transform-origin:0 13.81px;letter-spacing:0.377px;">(сек.)</span>
<span style="left:1079.6px;top:510.19px;font-size:11px;transform:scale(1.0000,1.09);transform-origin:0 13.81px;letter-spacing:0.290px;">Выгрузка</span>
<span style="left:1208.9px;top:508.79px;font-size:11px;transform:scale(1.0000,1.09);transform-origin:0 13.81px;">15</span>
<span style="left:1282.2px;top:511.19px;font-size:11px;transform:scale(1.0000,1.09);transform-origin:0 13.81px;letter-spacing:0.377px;">(сек.)</span>
<span style="left:778.2px;top:543.19px;font-size:11px;transform:scale(1.0000,1.09);transform-origin:0 13.81px;letter-spacing:0.023px;">Шибер бункера накопителя</span>
<span style="left:959.9px;top:539.79px;font-size:11px;transform:scale(1.0000,1.09);transform-origin:0 13.81px;">0</span>
<span style="left:1033.2px;top:543.19px;font-size:11px;transform:scale(1.0000,1.09);transform-origin:0 13.81px;letter-spacing:0.377px;">(сек.)</span>
<span style="left:15.3px;top:807.84px;font-size:12px;letter-spacing:-0.240px;">Нет связи</span>
<span style="left:91.2px;top:807.84px;font-size:12px;letter-spacing:0.295px;">Admin (Admin)</span>
<span style="left:181.3px;top:808.02px;font-size:11.5px;font-weight:bold;letter-spacing:0.062px;">Genel Elektronik Otomasyon Tekniği Mühendislik San. ve Tic. Ltd. Şti.</span>
<span style="left:574.6px;top:808.12px;font-size:13.5px;color:#8b0000;font-weight:bold;letter-spacing:0.122px;">is kodu</span>
<span style="left:631.9px;top:808.12px;font-size:13.5px;color:#000080;font-weight:bold;letter-spacing:0.300px;">Ежедневный итог производств:</span>
<span style="left:862.2px;top:808.12px;font-size:13.5px;color:#000080;font-weight:bold;">0</span>
</div></body></html>
